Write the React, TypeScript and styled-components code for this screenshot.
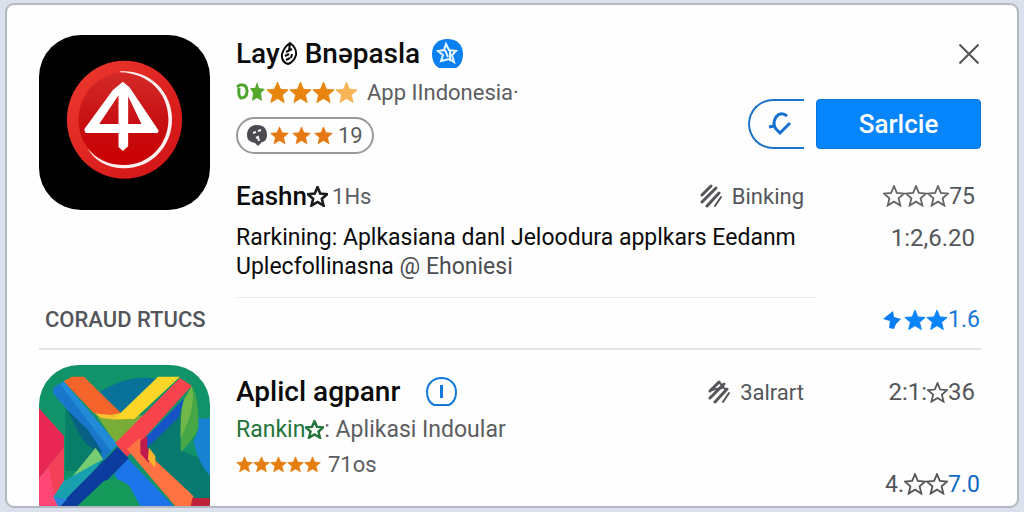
import React from 'react';
import styled, { createGlobalStyle } from 'styled-components';

const GlobalStyle = createGlobalStyle`
  * { box-sizing: border-box; }
  body {
    margin: 0;
    background: #dbe1ec;
    font-family: Roboto, "Liberation Sans", sans-serif;
    color: #0b0b0c;
  }
`;

const Page = styled.main`
  height: 100vh;
  padding: 3px 5px 4px 5px;
`;

const Card = styled.section`
  height: 100%;
  overflow: hidden;
  padding: 30px 36px 0 32px;
  background: #fefefe;
  border: 2px solid #b3b8c2;
  border-radius: 9px;
`;

const Entry = styled.article`
  display: flex;
  gap: 26px;
`;

const LogoFrame = styled.div<{ $radius: number }>`
  flex: none;
  width: 171px;
  height: 175px;
  border-radius: ${(p) => p.$radius}px;
  overflow: hidden;
  svg { display: block; width: 100%; height: 100%; }
`;

const Body = styled.div`
  flex: 1;
  min-width: 0;
`;

const Header = styled.header`
  display: flex;
  justify-content: space-between;
`;

const TitleRow = styled.div`
  display: flex;
  align-items: center;
  height: 38px;
`;

const Title = styled.h1`
  display: flex;
  align-items: center;
  margin: 0;
  font-size: 28px;
  line-height: 38px;
  font-weight: 500;
  white-space: pre;
`;

const TitleBadge = styled.span<{ $gap: number }>`
  display: flex;
  margin-left: ${(p) => p.$gap}px;
`;

const InlineRow = styled.div<{ $height: number }>`
  display: flex;
  align-items: center;
  height: ${(p) => p.$height}px;
`;

const Note = styled.span<{ $size?: number; $gap?: number }>`
  margin-left: ${(p) => p.$gap ?? 0}px;
  font-size: ${(p) => p.$size ?? 22}px;
  font-weight: 400;
  color: #5c5d61;
  white-space: pre;
`;

const Pill = styled.div`
  display: inline-flex;
  align-items: center;
  gap: 3px;
  height: 37px;
  margin-top: 6px;
  padding: 0 9px;
  border: 2px solid #98999d;
  border-radius: 19px;
`;

const Side = styled.div`
  display: flex;
  flex-direction: column;
  align-items: flex-end;
  gap: 26px;
`;

const CloseButton = styled.button`
  display: flex;
  align-items: center;
  justify-content: center;
  width: 24px;
  height: 38px;
  padding: 0;
  border: 0;
  background: none;
  cursor: pointer;
`;

const Actions = styled.div`
  display: flex;
  gap: 12px;
`;

const RoundButton = styled.button`
  display: flex;
  align-items: center;
  justify-content: center;
  width: 56px;
  height: 50px;
  padding: 0 0 0 5px;
  border: 2px solid #1a73c8;
  border-right: 0;
  border-radius: 25px 0 0 25px;
  background: none;
  cursor: pointer;
`;

const PrimaryButton = styled.button`
  width: 165px;
  height: 50px;
  padding: 0;
  border: 1px solid #0b74dc;
  border-radius: 4px;
  background: #0685fd;
  color: #fff;
  font: 500 26px Roboto, "Liberation Sans", sans-serif;
  cursor: pointer;
`;

const Details = styled.div`
  display: grid;
  grid-template-columns: minmax(0, 1fr) 171px;
  row-gap: 12px;
  margin-top: 27px;
`;

const SpreadRow = styled.div<{ $height: number }>`
  display: flex;
  align-items: center;
  justify-content: space-between;
  height: ${(p) => p.$height}px;
  padding-right: 6px;
`;

const Name = styled.strong`
  display: flex;
  align-items: center;
  font-size: 26px;
  font-weight: 500;
`;

const Tag = styled.span`
  display: flex;
  align-items: center;
  gap: 9px;
  font-size: 22px;
  color: #55565a;
`;

const Figure = styled.span<{ $height: number; $size?: number; $inset?: boolean; $color?: string }>`
  display: flex;
  align-items: center;
  justify-content: flex-end;
  height: ${(p) => p.$height}px;
  padding-right: ${(p) => (p.$inset ? 6 : 1)}px;
  font-size: ${(p) => p.$size ?? 23}px;
  color: ${(p) => p.$color ?? '#55565a'};
`;

const Blue = styled.span`
  color: #1169c4;
`;

const Green = styled.span`
  display: flex;
  align-items: center;
  font-size: 23px;
  color: #23733a;
`;

const Description = styled.p`
  margin: 0;
  font-size: 23px;
  line-height: 29px;
  span { color: #4c4d50; }
`;

const Rule = styled.hr`
  width: calc(100% - 166px);
  margin: 16px 0 0;
  border: 0;
  border-top: 1px solid #e9eaed;
`;

const SectionBar = styled.div`
  display: flex;
  align-items: center;
  justify-content: space-between;
  height: 52px;
  padding: 0 0 7px 6px;
  border-bottom: 2px solid #e3e4e8;
`;

const SectionTitle = styled.h2`
  margin: 0;
  font-size: 22px;
  font-weight: 500;
  color: #54555a;
`;

const SecondEntry = styled(Entry)`
  padding-top: 15px;
`;

const Split = styled(Body)`
  display: grid;
  grid-template-columns: minmax(0, 1fr) 171px;
  align-items: start;
  padding-top: 8px;
`;

const Scores = styled.div`
  display: flex;
  flex-direction: column;
  gap: 58px;
`;

const STAR = 'M12 1.2l3.1 7.4 8 .7-6.100 5.200 1.900 7.900L12 18.200l-6.900 4.200 1.900-7.900L.9 9.300l8-.7z';

function Star({ size, color, outline = false, weight = 2 }: { size: number; color: string; outline?: boolean; weight?: number }) {
  return (
    <svg width={size} height={size} viewBox="0 0 24 24" aria-hidden="true">
      <path d={STAR} fill={outline ? 'none' : color} stroke={color} strokeWidth={outline ? weight : 1} />
    </svg>
  );
}

function Stars({ count, ...rest }: { count: number; size: number; color: string; outline?: boolean; weight?: number }) {
  return <>{Array.from({ length: count }, (_, i) => <Star key={i} {...rest} />)}</>;
}

function ArrowLogo() {
  return (
    <svg viewBox="118 105 514 525" preserveAspectRatio="none" role="img" aria-label="Lay logo">
      <defs>
        <linearGradient id="disc" x1="0" y1="0" x2="1" y2="1">
          <stop offset="0" stopColor="#ee3a30" />
          <stop offset="1" stopColor="#cf1013" />
        </linearGradient>
        <linearGradient id="core" x1="0" y1="0" x2="0" y2="1">
          <stop offset="0" stopColor="#d42a28" />
          <stop offset=".6" stopColor="#c60c10" />
          <stop offset="1" stopColor="#cc0000" />
        </linearGradient>
      </defs>
      <rect x="118" y="105" width="514" height="525" fill="#000" />
      <ellipse cx="375" cy="359" rx="173" ry="177" fill="url(#disc)" />
      <ellipse cx="375" cy="359" rx="138" ry="142" fill="url(#core)" />
      <path d="M362 214C450 208 518 275 518 358C518 440 455 505 375 505C325 505 284 482 263 443C290 478 327 495 375 495C448 495 507 436 507 358C507 281 448 219 362 217Z" fill="#fff0f0" />
      <path fillRule="evenodd" d="M370 245L390 262L478 392L474 399H386V439L370 453L357 441V399H258L254 388L340 270ZM357 286L299 372H357ZM386 289V372H426Z" fill="#fff" />
    </svg>
  );
}

function RibbonLogo() {
  return (
    <svg viewBox="117 242 507 525" preserveAspectRatio="none" role="img" aria-label="Ribbon logo">
      <rect x="117" y="242" width="507" height="525" fill="#119369" />
      <path d="M195 370L300 470L310 560L195 560Z" fill="#087d67" />
      <path d="M285 330Q340 295 380 286Q420 275 470 284L360 388H335Z" fill="#08729b" />
      <path d="M440 490L540 350V500L590 520L624 575V660H590L445 510Z" fill="#08796e" />
      <path d="M590 400Q610 405 624 400V575Q590 540 575 470Q592 440 590 400Z" fill="#1783d2" />
      <path d="M117 372L191 455V490L117 582Z" fill="#e82755" />
      <path d="M117 582L191 490V767H117Z" fill="#ff4675" />
      <path d="M145 545L191 490V620L165 640Z" fill="#f34158" />
      <path d="M570 305Q592 340 589 435Q565 480 537 503Q535 420 545 350Z" fill="#47a646" />
      <path d="M570 305Q580 350 560 410L537 460Q535 390 545 350Z" fill="#72b848" />
      <path d="M283 386L360 390L440 395L345 478Z" fill="#78ad38" />
      <path d="M283 386H410L385 404Q330 408 300 400Z" fill="#f4c42e" />
      <path d="M190 291L215 277H250L360 386L330 392L280 387Z" fill="#f5652b" />
      <path d="M160 310L190 291L350 480L305 530V500L160 328Z" fill="#218bd8" />
      <path d="M160 310L178 298L330 500L305 530L300 500L260 440L160 328Z" fill="#1877cb" />
      <path d="M200 375L265 440L306 505Q255 490 235 445Z" fill="#075f83" />
      <path d="M470 277H535L400 404H340Z" fill="#fbd629" />
      <path d="M535 281L570 304L378 518L343 477Z" fill="#f8454d" />
      <path d="M548 342L530 400L440 488L418 508V475Z" fill="#1852c7" />
      <path d="M418 470L438 455V490L448 510V550L415 525Z" fill="#bf1a4b" />
      <path d="M378 520L530 680H420L340 570Z" fill="#1b75e8" />
      <path d="M378 495L417 460L418 508L442 535L448 515L575 635L570 680H533Z" fill="#ff7343" />
      <path d="M443 490L462 515V550L440 525Z" fill="#ffb22b" />
      <path d="M285 490L307 525L238 578L205 590Z" fill="#77cc73" />
      <path d="M307 525L240 610L185 665L160 638L190 590Z" fill="#18a1ad" />
      <path d="M350 488L383 522L230 680H170L200 640Z" fill="#0c3d9e" />
      <path d="M160 638L200 645L175 670Z" fill="#2a83df" />
      <path d="M215 680L310 590Q350 575 385 605L425 680Z" fill="#169a5b" />
      <path d="M572 640L624 642V700H560Z" fill="#bd2238" />
    </svg>
  );
}

function StripesIcon({ dense = false }: { dense?: boolean }) {
  return (
    <svg width="23" height="24" viewBox="0 0 23 24" fill="none" stroke="#55565a" strokeLinecap="round" aria-hidden="true">
      <path d="M2 11L11 2" strokeWidth="3" />
      <path d="M2 18L16 4M7 22L19 9" strokeWidth="3" />
      <path d="M15 22L21 13" strokeWidth="2" />
      {dense && <path d="M3 10L14 8M11 2L17 9" strokeWidth="2" />}
    </svg>
  );
}

export default function App() {
  return (
    <>
      <GlobalStyle />
      <Page>
        <Card>
          <Entry>
            <LogoFrame $radius={42}><ArrowLogo /></LogoFrame>
            <Body>
              <Header>
                <div>
                  <TitleRow>
                    <Title>
                      Lay
                      <svg width="18" height="24" viewBox="0 0 18 24" fill="none" stroke="#0b0b0c" strokeWidth="2" aria-hidden="true">
                        <path d="M10 1Q17 6 16 13Q14 20 8 22Q1 20 2 12Q4 5 10 1ZM10 2L9 8M6 10L12 7M5 14L9 12M6 18L10 16M12 12L11 16" />
                      </svg>
                      {' Bnəpasla'}
                    </Title>
                    <TitleBadge $gap={12}>
                      <svg width="31" height="30" viewBox="0 0 31 30" aria-hidden="true">
                        <path d="M15.500 0C25 0 31 6 31 15C31 22 28 27 24 29H7C3 27 0 22 0 15C0 6 6 0 15.500 0Z" fill="#0b80f0" />
                        <path d="M14 5L17 11L24 12L20 16L22 23L17 20L9 22L11 16L6 12L12 11ZM13 11L16 18M18 11V22" fill="none" stroke="#e8f7ff" strokeWidth="2" />
                      </svg>
                    </TitleBadge>
                  </TitleRow>
                  <InlineRow $height={38}>
                    <svg width="30" height="22" viewBox="0 0 30 22" aria-hidden="true">
                      <path d="M1 6L4 4Q11 3 11 10Q11 17 5 17Q2 15 3 7" fill="none" stroke="#4ba52f" strokeWidth="3" />
                      <path d="M21 1L23 7L29 8L25 12L26 20L21 17L16 20L17 12L14 7H19Z" fill="#55a82b" />
                    </svg>
                    <Stars count={3} size={23} color="#e7850f" />
                    <Star size={23} color="#f7b556" />
                    <Note $gap={9}>App IIndonesia·</Note>
                  </InlineRow>
                  <Pill>
                    <svg width="20" height="21" viewBox="0 0 20 21" aria-hidden="true">
                      <path d="M10 0C17 0 20 4 20 10C20 14 18 17 15 17L11 21L8 18C3 17 0 15 0 10C0 4 4 0 10 0Z" fill="#4a4c51" />
                      <path d="M6 8L9 7M11 6L14 5M9 13L11 12L12 16" stroke="#f2f2f2" strokeWidth="2" fill="none" />
                    </svg>
                    <Stars count={3} size={19} color="#e57812" />
                    <Note $gap={2}>19</Note>
                  </Pill>
                </div>
                <Side>
                  <CloseButton aria-label="Close">
                    <svg width="20" height="20" viewBox="0 0 20 20" stroke="#55524f" strokeWidth="2" aria-hidden="true">
                      <path d="M0.500 0.500L19.500 19.500M19.500 0.500L0.500 19.500" />
                    </svg>
                  </CloseButton>
                  <Actions>
                    <RoundButton aria-label="Refresh">
                      <svg width="24" height="24" viewBox="0 0 24 24" fill="none" stroke="#146fd0" strokeWidth="3" aria-hidden="true">
                        <path d="M19 4Q13 -1 8 5Q4 12 8 17L12 21L22 11M1 15L6 14" />
                      </svg>
                    </RoundButton>
                    <PrimaryButton>Sarlcie</PrimaryButton>
                  </Actions>
                </Side>
              </Header>
              <Details>
                <SpreadRow $height={30}>
                  <Name>
                    Eashn
                    <Star size={21} color="#1c1c1e" outline weight={3} />
                    <Note $gap={4}>1Hs</Note>
                  </Name>
                  <Tag><StripesIcon />Binking</Tag>
                </SpreadRow>
                <Figure $height={30} $inset>
                  <Stars count={3} size={22} color="#66676a" outline />75
                </Figure>
                <Description>
                  Rarkining: Aplkasiana danl Jeloodura applkars Eedanm Uplecfollinasna <span>@ Ehoniesi</span>
                </Description>
                <Figure $height={29} $size={24} $inset>1:2,6.20</Figure>
              </Details>
              <Rule />
            </Body>
          </Entry>
          <SectionBar>
            <SectionTitle>CORAUD RTUCS</SectionTitle>
            <Figure $height={30} $color="#1478dc">
              <svg width="21" height="20" viewBox="0 0 21 20" aria-hidden="true">
                <path d="M0 9L10 1L11 7L18 9L13 14L11 19L6 18L7 11Z" fill="#0a7bf2" />
              </svg>
              <Stars count={2} size={22} color="#0a84fb" />1.6
            </Figure>
          </SectionBar>
          <SecondEntry>
            <LogoFrame $radius={40}><RibbonLogo /></LogoFrame>
            <Split>
              <div>
                <SpreadRow $height={38}>
                  <TitleRow>
                    <Title as="h2">Aplicl agpanr</Title>
                    <TitleBadge $gap={26}>
                      <svg width="31" height="30" viewBox="0 0 31 30" fill="none" stroke="#1478d8" aria-hidden="true">
                        <path d="M15.500 1C24 1 30 7 30 15C30 22 27 26 23 28H8C4 26 1 22 1 15C1 7 7 1 15.500 1Z" strokeWidth="2" />
                        <path d="M15.500 8V21" strokeWidth="3" />
                      </svg>
                    </TitleBadge>
                  </TitleRow>
                  <Tag><StripesIcon dense />3alrart</Tag>
                </SpreadRow>
                <InlineRow $height={36}>
                  <Green>Rankin<Star size={19} color="#23733a" outline weight={3} /></Green>
                  <Note $size={23}>: Aplikasi Indoular</Note>
                </InlineRow>
                <InlineRow $height={34}>
                  <Stars count={5} size={17} color="#e57e10" />
                  <Note $gap={7}>71os</Note>
                </InlineRow>
              </div>
              <Scores>
                <Figure $height={38} $size={24} $inset>2:1:<Star size={21} color="#55565a" outline />36</Figure>
                <Figure $height={30}>4.<Stars count={2} size={22} color="#55565a" outline /><Blue>7.0</Blue></Figure>
              </Scores>
            </Split>
          </SecondEntry>
        </Card>
      </Page>
    </>
  );
}
